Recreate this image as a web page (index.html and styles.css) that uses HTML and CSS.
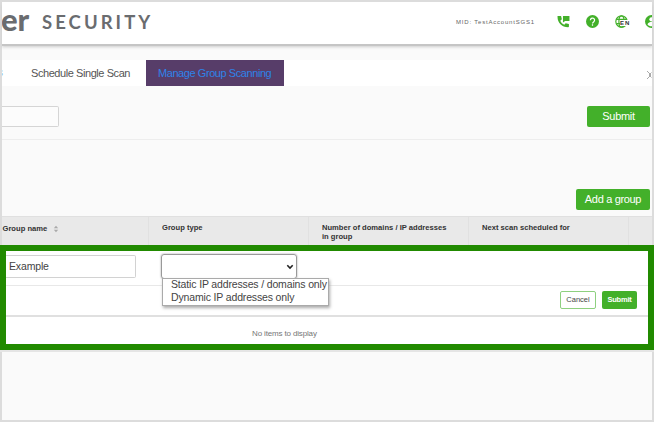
FILE: index.html
```html
<!DOCTYPE html>
<html lang="en">
<head>
<meta charset="utf-8">
<title>Manage Group Scanning</title>
<link rel="stylesheet" href="styles.css">
</head>
<body>
<div class="frame">
  <header class="topbar">
    <div class="brand"><span class="brand-mark">er</span><span class="brand-name">SECURITY</span></div>
    <div class="account">
      <span class="mid">MID: TestAccountSGS1</span>
      <svg class="icon phone" viewBox="0 0 24 24"><path d="M1 2h6.500l1.500 6-3 2.500c1.500 3.500 4 6 7.500 7.500l2.500-3 6 1.500v4.500c0 1-.6 1.500-1.500 1.500C9 22.500 1 14 1 4z"/><path d="M11 2h12v9h-8l-4 3z"/></svg>
      <svg class="icon help" viewBox="0 0 24 24"><circle cx="12" cy="12" r="12"/><path class="mark" d="M8.200 9.500a3.800 3.800 0 1 1 6.200 2.900c-1.400 1.100-2.300 1.600-2.300 3.400M12 17.300v2.500"/></svg>
      <span class="lang">
        <svg class="icon globe" viewBox="0 0 24 24"><circle cx="12" cy="12" r="10.500"/><ellipse cx="12" cy="12" rx="4.800" ry="10.500"/><path d="M2.500 8h19M2.500 16h19"/></svg>
        <span class="lang-code">EN</span>
      </span>
      <svg class="icon user" viewBox="0 0 24 24"><circle cx="12" cy="12" r="12"/><circle class="face" cx="12" cy="8" r="4"/><path class="face" d="M4.500 17c1-3 5-4 7.500-4s6.500 1 7.500 4c-3 5-12 5-15 0z"/></svg>
    </div>
  </header>

  <nav class="tabs">
    <span class="tab-cut">s</span>
    <span class="tab">Schedule Single Scan</span>
    <span class="tab active"><span>Manage Group Scanning</span></span>
    <svg class="next" viewBox="0 0 6 10"><path d="M1 1l4 4-4 4M5.500 2.500L3 5l2.500 2.500"/></svg>
  </nav>

  <section class="search">
    <div class="search-input"></div>
    <div class="btn btn-submit">Submit</div>
  </section>
  <section class="actions">
    <div class="btn btn-add">Add a group</div>
  </section>

  <div class="thead">
    <div class="th name"><span>Group name</span><svg class="sort" viewBox="0 0 6 8"><path d="M.8 3.200L3 .8l2.200 2.400zM.8 4.800L3 7.200l2.200-2.400z"/></svg></div>
    <div class="th"><span>Group type</span></div>
    <div class="th"><span>Number of domains / IP addresses</span><br><span>in group</span></div>
    <div class="th"><span>Next scan scheduled for</span></div>
    <div class="th"></div>
  </div>

  <div class="highlight">
    <div class="edit-row">
      <div class="name-input">Example</div>
      <div class="select">
        <svg class="caret" viewBox="0 0 8 6"><path d="M1.300 1.300L4 4l2.700-2.700"/></svg>
        <div class="options">
          <div class="option">Static IP addresses / domains only</div>
          <div class="option">Dynamic IP addresses only</div>
        </div>
      </div>
    </div>
    <div class="button-row">
      <div class="small-btn cancel">Cancel</div>
      <div class="small-btn save">Submit</div>
    </div>
    <div class="empty">No items to display</div>
  </div>
</div>
</body>
</html>
```

FILE: styles.css
```css
* { box-sizing: border-box; }
body {
  margin: 0;
  height: 423px;
  overflow: hidden;
  background: #fff;
  font-family: "Liberation Sans", Arial, sans-serif;
  color: #444;
}
.frame {
  width: 654px;
  height: 422px;
  border: 2px solid #dcdcdc;
  background: #fafafa;
}
.topbar {
  height: 42px;
  display: flex;
  justify-content: space-between;
  background: #fff;
  overflow: hidden;
  box-shadow: 0 2px 0 #c5c5c5, 0 3px 3px #ccc;
}
.brand { display: flex; color: #6a6c6f; white-space: nowrap; }
.brand-mark {
  width: 26px;
  margin-left: -1px;
  font: 900 31px/34px Lato, sans-serif;
}
.brand-name {
  margin-left: 15px;
  font: 700 18.5px/41px Lato, sans-serif;
  letter-spacing: 3.05px;
}
.account { width: 196px; height: 39px; flex: none; display: flex; align-items: center; }
.mid { width: 101px; flex: none; font-size: 6px; letter-spacing: 0.8px; white-space: nowrap; color: #666; }
.icon { flex: none; fill: #43b02a; }
.phone { width: 13px; height: 13px; }
.help { width: 13px; height: 13px; margin-left: 16px; }
.mark { fill: none; stroke: #fff; stroke-width: 2.300; }
.lang { display: flex; flex: none; align-items: center; margin-left: 16px; width: 17px; }
.globe { width: 13px; height: 13px; fill: none; stroke: #43b02a; stroke-width: 2.200; }
.lang-code { margin: 2px 0 0 -8px; background: #fff; font-size: 6px; line-height: 6px; font-weight: 700; letter-spacing: 1px; color: #333; }
.user { width: 13px; height: 13px; margin-left: 13px; }
.face { fill: #fff; }

.tabs {
  height: 26px;
  margin-top: 16px;
  display: flex;
  background: #fff;
  font-size: 11px;
  letter-spacing: -0.43px;
  line-height: 26px;
  white-space: nowrap;
  overflow: hidden;
}
.tab-cut { width: 29px; margin-left: -4px; flex: none; color: #8fbbe8; font-size: 10px; }
.tab { margin-left: 4px; width: 115px; color: #555; }
.active { width: 138px; margin-left: 0; padding-left: 12px; background: #573d69; color: #2e83e8; }
.next { width: 6px; height: 10px; margin: 10px 0 0 auto; fill: none; stroke: #aaa; }

.search {
  height: 54px;
  padding: 20px 2px 0 0;
  display: flex;
  justify-content: space-between;
  border-bottom: 1px solid #ededed;
}
.search-input { width: 57px; height: 21px; border: 1px solid #d5d5d5; border-left: 0; border-radius: 0 2px 2px 0; background: #fcfcfc; }
.btn { height: 21px; border-radius: 2px; background: #43b02a; color: #fff; font-size: 11px; letter-spacing: -0.33px; line-height: 20px; text-align: center; white-space: nowrap; }
.btn-submit { width: 63px; }
.actions { height: 76px; padding: 49px 2px 0 0; display: flex; justify-content: flex-end; }
.btn-add { width: 74px; }

.thead {
  height: 29px;
  display: grid;
  grid-template-columns: 147px 160px 160px 160px 23px;
  border-top: 1px solid #e0e0e0;
  background: #e9e9e9;
  color: #333;
  font-size: 7.6px;
  font-weight: 700;
  line-height: 9px;
}
.th { padding: 6px 0 0 13px; border-right: 1px solid #e1e1e1; white-space: nowrap; }
.th:last-child { border: 0; }
.name { padding: 7px 0 0 .5px; }
.sort { width: 6px; height: 8px; margin-left: 6px; vertical-align: -2px; fill: #aaa; }

.highlight {
  height: 105px;
  margin: 0 -2px;
  border: 6px solid #218a00;
  background: #fff;
  box-shadow: 0 2px 0 #e5e5e5;
}
.edit-row { height: 35px; display: flex; border-bottom: 1px solid #e8e8e8; }
.name-input { width: 130px; height: 23px; margin-top: 4px; padding-left: 3px; border: 1px solid #d2d2d2; border-left: 0; border-radius: 0 2px 2px 0; font-size: 10.5px; letter-spacing: -0.15px; line-height: 21px; }
.select {
  position: relative;
  width: 136px;
  height: 25px;
  margin: 3px 0 0 25px;
  border: 1px solid #999;
  border-radius: 3px;
  box-shadow: 0 0 2px #999;
}
.caret { position: absolute; right: 2px; top: 9px; width: 8px; height: 6px; fill: none; stroke: #222; stroke-width: 1.600; }
.options {
  position: absolute;
  left: 0;
  top: 23px;
  width: 167px;
  height: 28px;
  padding-left: 8px;
  border: 1px solid #aaa;
  background: #fff;
  box-shadow: 1px 2px 3px #aaa;
  font-size: 10.5px;
  letter-spacing: -0.15px;
  line-height: 12.500px;
  white-space: nowrap;
}
.option { margin-top: -1px; height: 13.500px; }
.button-row {
  height: 31px;
  display: flex;
  justify-content: flex-end;
  padding: 5px 11px 0 0;
  gap: 6px;
  border-bottom: 2px solid #e0e0e0;
}
.small-btn { width: 35px; height: 18px; border-radius: 2px; font-size: 7.5px; line-height: 17px; text-align: center; }
.cancel { width: 36px; border: 1px solid #8ed07f; line-height: 16px; }
.save { background: #43b02a; color: #fff; font-weight: 700; letter-spacing: -0.2px; }
.empty { padding-left: 246px; font-size: 8px; letter-spacing: -0.15px; line-height: 33px; color: #777; }
```
